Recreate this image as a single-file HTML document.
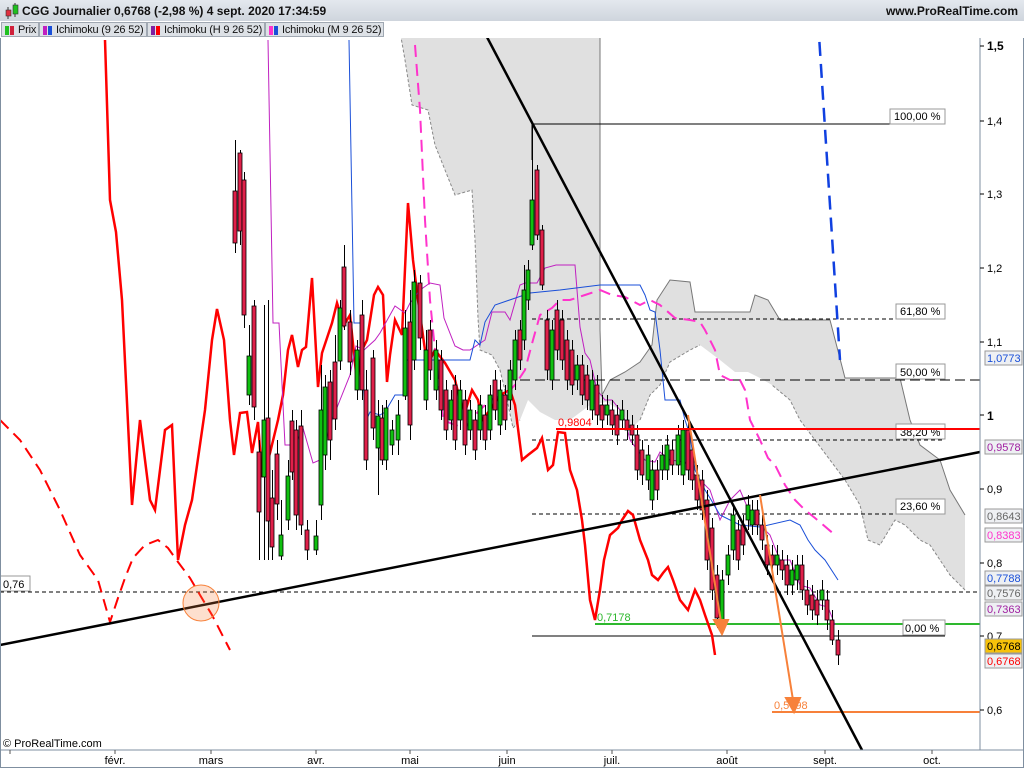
<!DOCTYPE html>
<html><head><meta charset="utf-8"><style>
html,body{margin:0;padding:0;width:1024px;height:768px;overflow:hidden;background:#fff;font-family:"Liberation Sans",Arial,sans-serif;}
#hdr{position:absolute;left:0;top:0;width:1024px;height:21px;background:linear-gradient(#e4e8ee,#cfd5dd);border-bottom:1px solid #9aa4b0;}
#hdr .t{position:absolute;left:22px;top:4px;font-size:12px;font-weight:bold;color:#111;white-space:nowrap;}
#hdr .r{position:absolute;right:6px;top:4px;font-size:12px;font-weight:bold;color:#111;}
#leg{position:absolute;left:0;top:21px;height:17px;width:1024px;background:#fff;}
.tab{position:absolute;top:1px;height:15px;background:#dde1e6;border:1px solid #a0a8b2;font-size:11px;line-height:14px;color:#111;padding-left:16px;box-sizing:border-box;white-space:nowrap;overflow:hidden;letter-spacing:-0.2px;}
.tab i{position:absolute;left:3px;top:3px;width:4px;height:9px;}
svg{position:absolute;left:0;top:0;}
</style></head><body>
<svg width="1024" height="768" xmlns="http://www.w3.org/2000/svg" font-family="Liberation Sans, Arial, sans-serif">
<rect x="0" y="38" width="980" height="712" fill="#fff"/>
<polygon fill="#e0e0e0" points="398,20 600,20 600,330 602,395 610,380 625,372 640,362 652,345 657,300 670,280 690,282 695,312 750,312 755,295 768,300 780,320 830,320 845,378 900,378 910,420 920,445 940,460 950,490 965,515 965,590 950,575 940,560 930,545 920,540 905,525 895,520 880,545 868,540 860,505 845,480 830,460 815,440 800,420 790,400 772,385 760,378 748,372 735,372 720,360 700,345 690,350 670,362 660,385 650,395 640,420 632,428 620,410 606,402 590,405 570,420 555,420 540,412 528,400 520,420 513,428 506,395 500,370 492,355 480,350 478,318 475,240 472,190 455,195 445,170 435,145 428,110 412,105 405,60"/>
<polyline fill="none" stroke="#888" stroke-dasharray="3,2" points="398,20 405,60 412,105 428,110 435,145 445,170 455,195 472,190 475,240 478,318 480,350 492,355 500,370 506,395 513,428 520,420"/>
<polyline fill="none" stroke="#888" stroke-dasharray="3,2" points="640,420 650,395 660,385 670,362 690,350 700,345"/>
<polyline fill="none" stroke="#888" stroke-dasharray="3,2" points="965,590 950,575 940,560 930,545 920,540 905,525 895,520 880,545 868,540 860,505 845,480 830,460 815,440 800,420 790,400 772,385"/>
<polyline fill="none" stroke="#777" points="600,20 600,330 602,395 610,380 625,372 640,362 652,345 657,300 670,280 690,282 695,312 750,312 755,295 768,300 780,320 830,320 845,378 900,378 910,420 920,445 940,460 950,490 965,515"/>
<g stroke="#000" stroke-width="1">
<line x1="532" y1="124" x2="945" y2="124"/>
<line x1="532" y1="319" x2="945" y2="319" stroke-dasharray="4,3"/>
<line x1="520" y1="380" x2="980" y2="380" stroke-dasharray="10,5"/>
<line x1="532" y1="440" x2="945" y2="440" stroke-dasharray="4,3"/>
<line x1="532" y1="514" x2="945" y2="514" stroke-dasharray="4,3"/>
<line x1="532" y1="636" x2="945" y2="636"/>
<line x1="0" y1="592" x2="980" y2="592" stroke-dasharray="4,3"/>
</g>
<line x1="556" y1="429" x2="980" y2="429" stroke="#f00" stroke-width="2"/>
<line x1="595" y1="624" x2="980" y2="624" stroke="#2eb82e" stroke-width="2"/>
<line x1="772" y1="712" x2="980" y2="712" stroke="#f7813a" stroke-width="2"/>
<line x1="818" y1="20" x2="840" y2="360" stroke="#1040e0" stroke-width="2.5" stroke-dasharray="14,8"/>
<polyline fill="none" stroke="#f00" stroke-width="2.5" points="105,40 110,200 116,232 122,300 132,505 140,420 150,500 155,510 165,430 172,425 178,560 185,525 192,500 205,410 212,340 217,309 224,340 230,420 234,455 240,413 247,412 252,453 258,422 262,477 270,453 278,420 283,395 288,350 292,335 298,367 302,350 306,347 312,278 318,387 322,353 332,323 337,303 344,325 350,315 357,382 362,350 367,340 374,295 378,287 383,295 387,382 390,355 395,320 402,335 408,203 413,260 418,300 425,350 430,360 435,350 445,363 455,380 460,400 465,412 472,390 478,400 482,420 490,410 500,395 510,390 515,405 522,460 528,455 537,448 542,438 548,470 553,465 558,432 565,433 570,470 577,490 582,520 585,545 590,600 595,620 600,590 604,560 610,535 618,528 622,520 628,511 633,515 640,540 648,560 652,575 658,580 663,573 668,567 673,580 680,600 688,610 695,590 700,600 705,615 712,635 715,655"/>
<polyline fill="none" stroke="#f00" stroke-width="2" stroke-dasharray="12,7" points="0,420 20,440 40,470 60,510 80,555 98,580 110,622 118,598 125,578 133,558 145,545 158,540 168,548 178,562 190,578 200,595 212,615 230,650"/>
<polyline fill="none" stroke="#ff33cc" stroke-width="2" stroke-dasharray="12,7" points="415,45 420,110 425,220 430,300 435,350 443,420 455,425 465,428 475,415 490,400 505,395 515,385 525,370 533,340 540,315 552,308 560,300 570,300 585,295 600,290 612,295 625,297 640,305 650,300 660,305 675,318 690,320 700,322 705,330 715,350 720,375 730,380 740,380 745,390 750,420 760,440 768,458 775,465 785,485 795,500 805,510 815,518 835,535"/>
<polyline fill="none" stroke="#c020c0" stroke-width="1" points="268,40 273,323 279,323 285,445 295,445 303,428 313,463 320,460 332,420 338,405 350,375 356,346 364,350 375,340 380,333 395,306 405,313 410,303 420,290 430,283 440,285 444,318 455,346 463,350 470,350 485,340 492,312 505,312 510,320 520,285 525,283 537,283 545,268 556,265 575,265 580,327 585,353 590,360 597,390 605,400 612,400 620,410 625,420 630,440 645,460 655,462 660,452 670,460 685,462 690,470 700,480 710,490 720,520 730,500 740,490 755,525 760,525 770,535 775,548 780,560 790,560 800,585 810,588 820,605 828,607 835,625"/>
<polyline fill="none" stroke="#1a4fd8" stroke-width="1" points="349,40 354,323 361,323 365,423 370,412 380,415 385,412 395,395 403,395 406,360 447,360 470,360 475,340 480,345 485,322 495,305 530,293 560,290 600,285 640,285 645,295 650,310 655,312 660,350 665,400 680,400 685,420 690,435 695,470 705,490 710,498 720,515 740,525 760,527 790,520 800,525 808,540 815,550 825,560 838,580"/>
<!-- candle wicks -->
<path fill="none" stroke="#000" stroke-width="1" d="M235.5 140V253M240.5 150V245M244.5 172V328M249.5 325V405M254.5 300V420M259.5 440V560M264.5 305V560M268.5 300V560M272.5 470V560M277.5 440V520M281.5 500V560M288.5 460V530M292.5 410V480M296.5 420V530M301.5 410V535M307.5 520V560M316.5 520V555M321.5 365V520M325.5 375V470M330.5 370V460M335.5 335V430M340.5 300V370M344.5 245V330M350.5 310V375M357.5 340V400M362.5 300V400M366.5 370V470M373.5 350V440M378.5 400V495M382.5 405V465M386.5 400V470M392.5 420V455M398.5 400V455M405.5 310V400M410.5 290V440M414.5 270V370M420.5 275V350M426.5 330V410M430.5 320V380M436.5 340V400M441.5 350V420M446.5 380V440M451.5 390V430M455.5 375V450M460.5 380V430M465.5 390V455M470.5 400V440M475.5 410V460M480.5 395V440M485.5 405V450M490.5 385V440M495.5 370V420M500.5 380V435M505.5 385V430M510.5 360V410M515.5 330V390M520.5 320V370M524.5 265V350M528.5 260V310M532.5 124V250M537.5 165V240M542.5 225V290M547.5 310V380M552.5 320V390M557.5 300V360M562.5 310V370M567.5 330V390M572.5 340V395M577.5 355V390M582.5 355V405M587.5 365V410M592.5 370V420M597.5 375V425M602.5 395V430M607.5 395V425M612.5 400V435M617.5 405V445M622.5 400V430M627.5 410V440M632.5 415V445M637.5 425V480M642.5 440V485M648.5 445V490M652.5 460V510M657.5 460V500M662.5 445V480M667.5 435V480M672.5 440V475M678.5 425V475M683.5 420V485M688.5 420V480M692.5 440V490M697.5 465V510M702.5 470V520M707.5 490V570M712.5 518V600M717.5 565V628M722.5 570V630M728.5 545V585M733.5 505V560M738.5 520V570M743.5 515V555M748.5 495V530M752.5 500V535M757.5 500V535M762.5 515V550M767.5 535V575M772.5 545V575M777.5 545V575M782.5 550V580M787.5 555V595M792.5 560V595M797.5 555V590M802.5 555V600M807.5 580V615M812.5 585V620M817.5 590V625M822.5 580V610M827.5 590V630M832.5 610V645M838.5 630V665"/>
<!-- red bodies -->
<g fill="#e0204a" stroke="#000" stroke-width="0.8">
<rect x="233" y="191" width="4" height="52"/><rect x="238" y="153" width="4" height="78"/><rect x="242" y="180" width="4" height="135"/><rect x="252" y="306" width="4" height="101"/><rect x="257" y="452" width="4" height="60"/><rect x="266" y="418" width="4" height="103"/><rect x="270" y="498" width="4" height="49"/><rect x="275" y="454" width="4" height="50"/><rect x="290" y="421" width="4" height="51"/><rect x="294" y="430" width="4" height="85"/><rect x="299" y="426" width="4" height="99"/><rect x="305" y="530" width="4" height="20"/><rect x="328" y="382" width="4" height="58"/><rect x="333" y="362" width="4" height="57"/><rect x="342" y="267" width="4" height="59"/><rect x="348" y="322" width="4" height="40"/><rect x="360" y="315" width="4" height="75"/><rect x="364" y="390" width="4" height="70"/><rect x="371" y="358" width="4" height="70"/><rect x="380" y="418" width="4" height="42"/><rect x="408" y="322" width="4" height="103"/><rect x="418" y="283" width="4" height="55"/><rect x="428" y="330" width="4" height="40"/><rect x="439" y="360" width="4" height="50"/><rect x="444" y="390" width="4" height="40"/><rect x="453" y="385" width="4" height="55"/><rect x="463" y="400" width="4" height="45"/><rect x="473" y="420" width="4" height="30"/><rect x="483" y="415" width="4" height="25"/><rect x="493" y="380" width="4" height="30"/><rect x="503" y="395" width="4" height="25"/><rect x="518" y="330" width="4" height="30"/><rect x="535" y="170" width="4" height="65"/><rect x="540" y="230" width="4" height="55"/><rect x="545" y="320" width="4" height="50"/><rect x="555" y="310" width="4" height="40"/><rect x="560" y="320" width="4" height="40"/><rect x="565" y="340" width="4" height="40"/><rect x="570" y="350" width="4" height="35"/><rect x="580" y="365" width="4" height="30"/><rect x="585" y="375" width="4" height="25"/><rect x="595" y="385" width="4" height="30"/><rect x="600" y="405" width="4" height="15"/><rect x="610" y="410" width="4" height="15"/><rect x="615" y="415" width="4" height="20"/><rect x="625" y="420" width="4" height="10"/><rect x="630" y="425" width="4" height="10"/><rect x="635" y="435" width="4" height="35"/><rect x="640" y="450" width="4" height="25"/><rect x="655" y="470" width="4" height="20"/><rect x="670" y="450" width="4" height="15"/><rect x="686" y="430" width="4" height="40"/><rect x="690" y="450" width="4" height="30"/><rect x="695" y="475" width="4" height="25"/><rect x="700" y="480" width="4" height="30"/><rect x="705" y="500" width="4" height="60"/><rect x="710" y="528" width="4" height="62"/><rect x="715" y="575" width="4" height="43"/><rect x="736" y="530" width="4" height="30"/><rect x="741" y="525" width="4" height="20"/><rect x="755" y="510" width="4" height="15"/><rect x="760" y="525" width="4" height="15"/><rect x="765" y="545" width="4" height="20"/><rect x="770" y="555" width="4" height="10"/><rect x="780" y="560" width="4" height="10"/><rect x="785" y="565" width="4" height="20"/><rect x="800" y="565" width="4" height="25"/><rect x="805" y="590" width="4" height="15"/><rect x="810" y="595" width="4" height="15"/><rect x="815" y="600" width="4" height="15"/><rect x="825" y="600" width="4" height="20"/><rect x="830" y="620" width="4" height="20"/><rect x="836" y="640" width="4" height="15"/>
</g>
<g fill="#10c010" stroke="#000" stroke-width="0.8">
<rect x="247" y="356" width="4" height="39"/><rect x="262" y="420" width="4" height="57"/><rect x="279" y="535" width="4" height="21"/><rect x="286" y="476" width="4" height="44"/><rect x="314" y="536" width="4" height="14"/><rect x="319" y="410" width="4" height="95"/><rect x="323" y="387" width="4" height="68"/><rect x="338" y="308" width="4" height="53"/><rect x="355" y="350" width="4" height="40"/><rect x="376" y="416" width="4" height="32"/><rect x="384" y="408" width="4" height="52"/><rect x="390" y="430" width="4" height="15"/><rect x="396" y="415" width="4" height="25"/><rect x="403" y="328" width="4" height="68"/><rect x="412" y="282" width="4" height="78"/><rect x="424" y="350" width="4" height="50"/><rect x="434" y="350" width="4" height="40"/><rect x="449" y="400" width="4" height="20"/><rect x="458" y="390" width="4" height="30"/><rect x="468" y="410" width="4" height="20"/><rect x="478" y="405" width="4" height="25"/><rect x="488" y="395" width="4" height="35"/><rect x="498" y="390" width="4" height="35"/><rect x="508" y="370" width="4" height="30"/><rect x="513" y="340" width="4" height="40"/><rect x="522" y="290" width="4" height="50"/><rect x="526" y="270" width="4" height="30"/><rect x="530" y="200" width="4" height="45"/><rect x="550" y="330" width="4" height="50"/><rect x="575" y="365" width="4" height="15"/><rect x="590" y="380" width="4" height="30"/><rect x="605" y="405" width="4" height="10"/><rect x="620" y="410" width="4" height="10"/><rect x="646" y="455" width="4" height="25"/><rect x="650" y="470" width="4" height="30"/><rect x="660" y="455" width="4" height="15"/><rect x="665" y="445" width="4" height="25"/><rect x="676" y="435" width="4" height="30"/><rect x="681" y="430" width="4" height="45"/><rect x="720" y="580" width="4" height="40"/><rect x="726" y="555" width="4" height="20"/><rect x="731" y="515" width="4" height="35"/><rect x="746" y="505" width="4" height="15"/><rect x="750" y="510" width="4" height="15"/><rect x="775" y="555" width="4" height="10"/><rect x="790" y="570" width="4" height="15"/><rect x="795" y="565" width="4" height="15"/><rect x="820" y="590" width="4" height="10"/>
</g>
<line x1="532" y1="124" x2="532" y2="160" stroke="#000"/>
<line x1="478" y1="20" x2="862" y2="750" stroke="#000" stroke-width="2.5"/>
<line x1="0" y1="645" x2="980" y2="452" stroke="#000" stroke-width="2.5"/>
<g stroke="#f7813a" stroke-width="2" fill="#f7813a">
<line x1="688" y1="415" x2="721" y2="622"/><polygon points="714,620 728,620 722,634"/>
<line x1="760" y1="495" x2="793" y2="700"/><polygon points="786,698 800,698 794,712"/>
</g>
<circle cx="201" cy="603" r="18" fill="#f7813a" fill-opacity="0.25" stroke="#f7813a" stroke-width="1"/>
<g font-size="11" fill="#000">
<rect x="890" y="109" width="55" height="15" fill="#fff" stroke="#999"/><text x="894" y="120">100,00 %</text>
<rect x="896" y="304" width="49" height="15" fill="#fff" stroke="#999"/><text x="900" y="315">61,80 %</text>
<rect x="896" y="364" width="49" height="15" fill="#fff" stroke="#999"/><text x="900" y="376">50,00 %</text>
<rect x="896" y="424" width="49" height="15" fill="#fff" stroke="#999"/><text x="900" y="436">38,20 %</text>
<rect x="896" y="499" width="49" height="15" fill="#fff" stroke="#999"/><text x="900" y="510">23,60 %</text>
<rect x="903" y="620" width="42" height="15" fill="#fff" stroke="#999"/><text x="905" y="632">0,00 %</text>
<rect x="0" y="576" width="30" height="15" fill="#fff" stroke="#999"/><text x="3" y="588">0,76</text>
<text x="558" y="426" fill="#f00">0,9804</text>
<text x="597" y="621" fill="#2eb82e">0,7178</text>
<text x="774" y="709" fill="#f7813a">0,5798</text>
<text x="3" y="747">© ProRealTime.com</text>
</g>
<line x1="556" y1="429" x2="980" y2="429" stroke="#f00" stroke-width="2"/>
<rect x="981" y="38" width="43" height="730" fill="#fff"/>
<line x1="980" y1="38" x2="980" y2="750" stroke="#7f8fa0"/>
<line x1="0" y1="750" x2="1024" y2="750" stroke="#7f8fa0"/>
<g stroke="#000">
<line x1="980" y1="46" x2="984" y2="46"/><line x1="980" y1="121" x2="984" y2="121"/><line x1="980" y1="194" x2="984" y2="194"/><line x1="980" y1="268" x2="984" y2="268"/><line x1="980" y1="342" x2="984" y2="342"/><line x1="980" y1="415" x2="984" y2="415"/><line x1="980" y1="489" x2="984" y2="489"/><line x1="980" y1="563" x2="984" y2="563"/><line x1="980" y1="636" x2="984" y2="636"/><line x1="980" y1="710" x2="984" y2="710"/>
</g>
<g font-size="11" fill="#000">
<text x="987" y="50" font-weight="bold" font-size="12">1,5</text>
<text x="987" y="125">1,4</text><text x="987" y="198">1,3</text><text x="987" y="272">1,2</text><text x="987" y="346">1,1</text>
<text x="987" y="420" font-weight="bold" font-size="12">1</text>
<text x="987" y="493">0,9</text><text x="987" y="567">0,8</text><text x="987" y="640">0,7</text><text x="987" y="714">0,6</text>
</g>
<g font-size="11">
<rect x="985" y="351" width="37" height="14" fill="#eef0f3" stroke="#999"/><text x="987" y="362" fill="#1a4fd8">1,0773</text>
<rect x="985" y="440" width="37" height="14" fill="#eef0f3" stroke="#999"/><text x="987" y="451" fill="#a020a0">0,9578</text>
<rect x="985" y="509" width="37" height="14" fill="#eef0f3" stroke="#999"/><text x="987" y="520" fill="#666">0,8643</text>
<rect x="985" y="528" width="37" height="14" fill="#eef0f3" stroke="#999"/><text x="987" y="539" fill="#ff33cc">0,8383</text>
<rect x="985" y="571" width="37" height="14" fill="#eef0f3" stroke="#999"/><text x="987" y="582" fill="#1a4fd8">0,7788</text>
<rect x="985" y="586" width="37" height="14" fill="#eef0f3" stroke="#999"/><text x="987" y="597" fill="#666">0,7576</text>
<rect x="985" y="602" width="37" height="14" fill="#eef0f3" stroke="#999"/><text x="987" y="613" fill="#a020a0">0,7363</text>
<rect x="985" y="639" width="37" height="14" fill="#f7c20a" stroke="#999"/><text x="987" y="650" fill="#000">0,6768</text>
<rect x="985" y="654" width="37" height="14" fill="#eef0f3" stroke="#999"/><text x="987" y="665" fill="#f00">0,6768</text>
</g>
<g stroke="#555"><line x1="10" y1="750" x2="10" y2="754"/><line x1="115" y1="750" x2="115" y2="754"/><line x1="211" y1="750" x2="211" y2="754"/><line x1="316" y1="750" x2="316" y2="754"/><line x1="410" y1="750" x2="410" y2="754"/><line x1="507" y1="750" x2="507" y2="754"/><line x1="612" y1="750" x2="612" y2="754"/><line x1="727" y1="750" x2="727" y2="754"/><line x1="825" y1="750" x2="825" y2="754"/><line x1="932" y1="750" x2="932" y2="754"/></g>
<g font-size="11" fill="#000" text-anchor="middle">
<text x="115" y="764">févr.</text><text x="211" y="764">mars</text><text x="316" y="764">avr.</text><text x="410" y="764">mai</text><text x="507" y="764">juin</text><text x="612" y="764">juil.</text><text x="727" y="764">août</text><text x="825" y="764">sept.</text><text x="932" y="764">oct.</text>
</g>
<rect x="0.5" y="0.5" width="1023" height="767" fill="none" stroke="#7f8fa0"/>
</svg>
<div id="hdr"><svg width="18" height="20" style="position:absolute;left:3px;top:1px"><line x1="5" y1="6" x2="5" y2="18" stroke="#333"/><rect x="3" y="9" width="5" height="6" fill="#e03040" stroke="#333" stroke-width=".6"/><line x1="12" y1="2" x2="12" y2="16" stroke="#333"/><rect x="10" y="4" width="5" height="9" fill="#20c020" stroke="#333" stroke-width=".6"/></svg><span class="t">CGG Journalier 0,6768 (-2,98 %) 4 sept. 2020 17:34:59</span><span class="r">www.ProRealTime.com</span></div>
<div id="leg">
<div class="tab" style="left:1px;width:38px"><i style="background:#20c020"></i><i style="left:8px;background:#d0203a"></i>Prix</div>
<div class="tab" style="left:39px;width:108px"><i style="background:#c020c0"></i><i style="left:8px;background:#1a4fd8"></i>Ichimoku (9 26 52)</div>
<div class="tab" style="left:147px;width:118px"><i style="background:#8020a0"></i><i style="left:8px;background:#f00"></i>Ichimoku (H 9 26 52)</div>
<div class="tab" style="left:265px;width:119px"><i style="background:#ff33cc"></i><i style="left:8px;background:#1a4fd8"></i>Ichimoku (M 9 26 52)</div>
</div>
</body></html>
